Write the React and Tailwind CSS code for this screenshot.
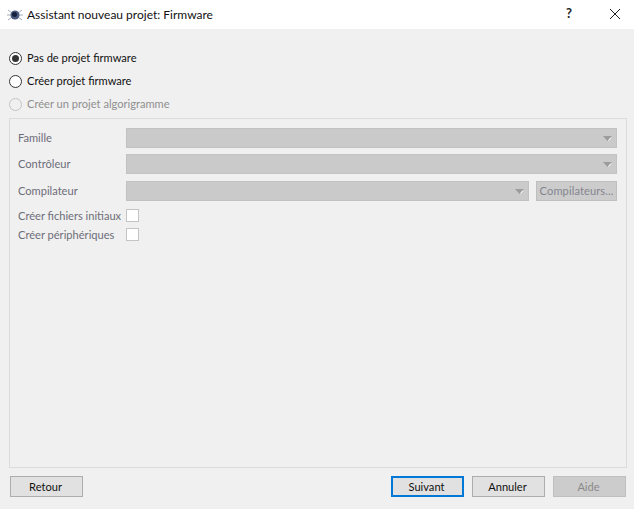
const font = { fontFamily: 'Lato, sans-serif' };

function AppIcon() {
  return (
    <svg width="16" height="14" viewBox="0 0 16 14" className="shrink-0">
      <path d="M1 2 L5 5 M15 2 L11 5 M1 12 L5 9 M15 12 L11 9 M0 7 H4 M12 7 H16" stroke="#a4adbd" strokeWidth="1" />
      <circle cx="8" cy="7" r="4.5" fill="#4a5a80" />
      <circle cx="7.5" cy="6.5" r="2.5" fill="#16203a" />
    </svg>
  );
}

function Radio({ label, checked, disabled }) {
  return (
    <div className="flex items-center h-[23px]">
      <span
        className={`w-[13px] h-[13px] rounded-full border flex items-center justify-center ${
          disabled ? 'border-[#c4c4c4] bg-[#f0f0f0]' : 'border-[#333333] bg-white'
        }`}
      >
        {checked && <span className="w-[7px] h-[7px] rounded-full bg-[#333333]" />}
      </span>
      <span className={`ml-[5px] text-[11.1px] whitespace-nowrap ${disabled ? 'text-[#8f8f8f]' : 'text-[#111111]'}`}>
        {label}
      </span>
    </div>
  );
}

function Combo({ className }) {
  return (
    <div className={`h-5 bg-[#cacaca] border border-[#c2c2c2] flex items-center justify-end pr-1 ${className}`}>
      <svg width="9" height="5" viewBox="0 0 9 5">
        <path d="M0 0 H9 L4.5 5 Z" fill="#9c9c9c" />
        <path d="M8 1.5 L5.5 4.5" stroke="#ffffff" strokeWidth="1" />
      </svg>
    </div>
  );
}

function Field({ label, children, className, labelClass = '' }) {
  return (
    <div className={`flex items-center ${className}`}>
      <span className={`w-[108px] shrink-0 text-[11.1px] whitespace-nowrap text-[#6d6d78] ${labelClass}`}>{label}</span>
      {children}
    </div>
  );
}

function Check() {
  return <span className="w-[13px] h-[13px] bg-white border border-[#c4c4c4]" />;
}

function Button({ label, primary, disabled, className = '' }) {
  let look = 'bg-[#e1e1e1] border border-[#adadad] text-[#111111]';
  if (primary) look = 'bg-[#e1e1e1] border-2 border-[#0078d7] text-[#111111]';
  if (disabled) look = 'bg-[#cccccc] border border-[#bfbfbf] text-[#8a8a8a]';
  return (
    <div className={`w-[73px] h-[21px] flex items-center justify-center pt-0.5 pr-0.5 text-[11.1px] ${look} ${className}`}>
      {label}
    </div>
  );
}

export default function App() {
  return (
    <div className="w-[634px] h-[509px] flex flex-col bg-[#f0f0f0] overflow-hidden" style={font}>
      <div className="h-[29px] bg-white flex items-center shrink-0">
        <div className="ml-[7px]"><AppIcon /></div>
        <span className="ml-1 text-[12px] text-[#111111]">Assistant nouveau projet: Firmware</span>
        <span className="ml-auto text-[13px] font-bold text-[#222222] mr-[37px] mb-0.5">?</span>
        <svg width="12" height="12" viewBox="0 0 12 12" className="mr-[13px] mb-0.5">
          <path d="M1 1 L11 11 M11 1 L1 11" stroke="#222222" strokeWidth="1" />
        </svg>
      </div>

      <div className="flex-1 flex flex-col pl-[9px] pr-[7px] pt-[17.5px]">
        <Radio label="Pas de projet firmware" checked />
        <Radio label="Créer projet firmware" />
        <Radio label="Créer un projet algorigramme" disabled />

        <div className="mt-[2.5px] h-[350px] border border-[#dcdcdc] pl-[8px] pt-[9px] pr-[9px]">
          <Field label="Famille"><Combo className="flex-1" /></Field>
          <Field label="Contrôleur" className="mt-1.5"><Combo className="flex-1" /></Field>
          <Field label="Compilateur" className="mt-[7px]">
            <Combo className="w-[403px]" />
            <div className="ml-[7px] w-[81px] h-5 bg-[#cccccc] border border-[#bfbfbf] flex items-center justify-center text-[11.1px] tracking-[0.1px] whitespace-nowrap text-[#85858f]">
              Compilateurs...
            </div>
          </Field>
          <Field label="Créer fichiers initiaux" className="mt-2 h-[13px]" labelClass="pt-0.5"><Check /></Field>
          <Field label="Créer périphériques" className="mt-1.5 h-[13px]" labelClass="pt-0.5"><Check /></Field>
        </div>

        <div className="flex mt-2 pl-px">
          <Button label="Retour" />
          <Button label="Suivant" primary className="ml-auto" />
          <Button label="Annuler" className="ml-2" />
          <Button label="Aide" disabled className="ml-2 mr-px" />
        </div>
      </div>
    </div>
  );
}
